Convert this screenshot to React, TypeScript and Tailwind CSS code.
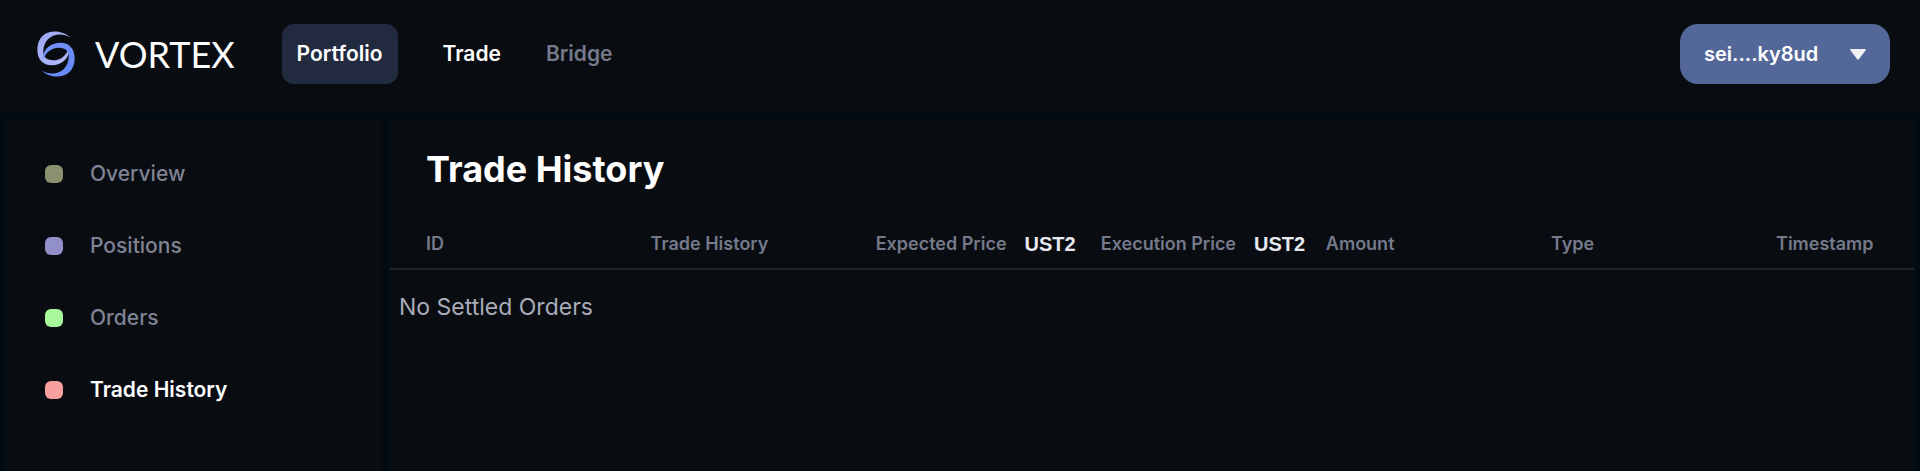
const navItems = [
  { label: "Portfolio", className: "rounded-xl bg-[#222a3f] px-[15px] text-white" },
  { label: "Trade", className: "text-white" },
  { label: "Bridge", className: "text-[#757a8b]" },
];

const sections = [
  { label: "Overview", dot: "bg-[#8b906e]", text: "font-medium text-[#7f8394]" },
  { label: "Positions", dot: "bg-[#9290c9]", text: "font-medium text-[#7f8394]" },
  { label: "Orders", dot: "bg-[#a8f99b]", text: "font-medium text-[#7f8394]" },
  { label: "Trade History", dot: "bg-[#f9a09f]", text: "font-semibold text-white" },
];

const columns: { label: string; unit?: string }[] = [
  { label: "ID" },
  { label: "Trade History" },
  { label: "Expected Price", unit: "UST2" },
  { label: "Execution Price", unit: "UST2" },
  { label: "Amount" },
  { label: "Type" },
  { label: "Timestamp" },
];

const crescent =
  "M151 84C124 56 51 54 51 122C51 150 68 168 94 168C126 168 150 145 146 118C137 142 117 154 98 153C80 152 69 144 69 128C69 76 120 64 151 84Z";

function Logo() {
  return (
    <svg viewBox="50 65 115 138" className="h-[46px] w-[38px]" aria-hidden="true">
      <defs>
        <linearGradient id="upper" x1="0" y1="0" x2="1" y2="1">
          <stop offset="0" stopColor="#9aa9f4" />
          <stop offset="1" stopColor="#b4b9fb" />
        </linearGradient>
        <linearGradient id="lower" x1="0" y1="0" x2="1" y2="1">
          <stop offset="0" stopColor="#6688fa" />
          <stop offset="1" stopColor="#7291f6" />
        </linearGradient>
      </defs>
      <path d={crescent} fill="url(#upper)" />
      <path d={crescent} fill="url(#lower)" transform="rotate(180 107.5 134)" />
    </svg>
  );
}

export default function App() {
  return (
    <div className="flex min-h-screen flex-col bg-[#010c12] font-['Inter',sans-serif] text-white">
      <header className="flex items-start bg-[#090c11] pt-6 pr-[30px] pb-[29px] pl-[37px]">
        <a href="#home" className="flex h-[60px] items-center gap-5">
          <Logo />
          <span className="font-['Lato',sans-serif] text-[36px] leading-none">VORTEX</span>
        </a>
        <nav className="ml-[47px] flex gap-[45px]">
          {navItems.map((item) => (
            <a
              key={item.label}
              href={`#${item.label.toLowerCase()}`}
              className={`flex h-[60px] items-center text-[21px] font-semibold ${item.className}`}
            >
              {item.label}
            </a>
          ))}
        </nav>
        <button
          type="button"
          className="ml-auto flex h-[60px] w-[210px] items-center justify-between rounded-[18px] bg-[#536899] px-6 text-xl font-semibold"
        >
          sei....ky8ud
          <svg viewBox="0 0 16 11" className="h-[11px] w-4" aria-hidden="true">
            <path d="M1 0H15Q16.500 0 15.500 1.500L9 10Q8 11 7 10L0.500 1.500Q-0.500 0 1 0Z" fill="#f0f1f5" />
          </svg>
        </button>
      </header>

      <div className="flex grow gap-2 px-[6px] pt-[7px]">
        <aside className="w-[376px] shrink-0 bg-[#090c11] pt-[38px] pl-[39px]">
          <ul className="flex flex-col gap-10">
            {sections.map((section) => (
              <li key={section.label}>
                <a href="#portfolio" className="flex h-8 items-center gap-[27px]">
                  <span className={`size-[18px] rounded-md ${section.dot}`} />
                  <span className={`text-[21px] ${section.text}`}>{section.label}</span>
                </a>
              </li>
            ))}
          </ul>
        </aside>

        <main className="min-w-0 grow bg-[#090c11] pt-[29px]">
          <h1 className="pl-9 text-4xl font-bold">Trade History</h1>
          <table className="mt-[30px] w-full table-fixed border-collapse text-left whitespace-nowrap">
            <colgroup>
              <col className="w-[17.1%]" />
              <col />
              <col />
              <col />
              <col />
              <col />
              <col className="w-[138px]" />
            </colgroup>
            <thead>
              <tr className="border-b-2 border-[#1f232a]">
                {columns.map((column) => (
                  <th
                    key={column.label}
                    scope="col"
                    className="h-[50px] p-0 text-[18px] font-semibold text-[#757a8b] first:pl-9"
                  >
                    <span className="flex items-center gap-[18px]">
                      {column.label}
                      {column.unit && (
                        <b className="font-['Liberation_Sans',sans-serif] text-xl leading-none font-bold text-[#e8eaf0]">
                          {column.unit}
                        </b>
                      )}
                    </span>
                  </th>
                ))}
              </tr>
            </thead>
            <tbody>
              <tr>
                <td colSpan={7} className="h-[76px] p-0 pl-[9px] text-[23px] text-[#a9acb8]">
                  No Settled Orders
                </td>
              </tr>
            </tbody>
          </table>
        </main>
      </div>
    </div>
  );
}
